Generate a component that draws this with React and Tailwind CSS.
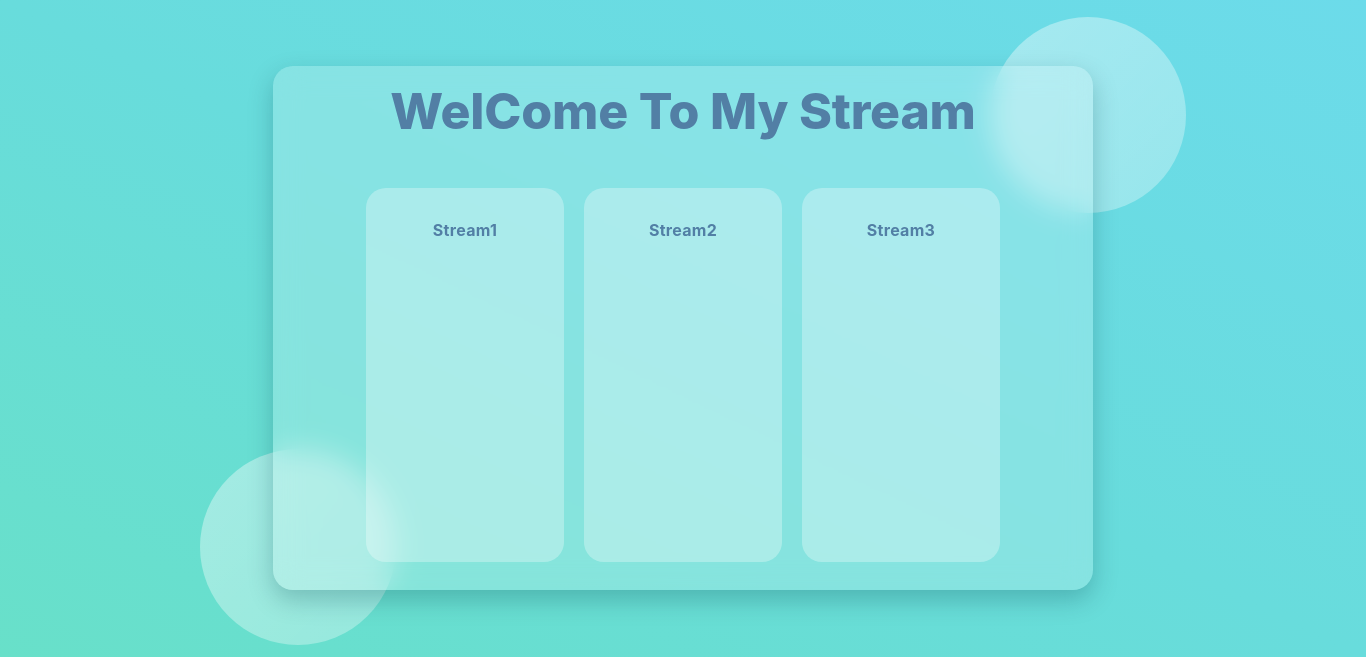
export default function App() {
  const streams = ['Stream1', 'Stream2', 'Stream3'];

  return (
    <div className="relative h-[657px] w-full overflow-hidden bg-linear-to-tr from-[#68e0c9] via-[#68dcdc] to-[#6cdbea] font-['Inter',sans-serif]">
      {/* floating circles behind the glass */}
      <div className="absolute left-[990px] top-[17px] h-[196px] w-[196px] rounded-full bg-linear-to-br from-white/40 to-white/30" />
      <div className="absolute left-[200px] top-[449px] h-[196px] w-[196px] rounded-full bg-linear-to-br from-white/40 to-white/30" />

      <div className="flex h-full items-start justify-center pt-[66px]">
        <div className="relative flex h-[524px] w-[820px] flex-col items-center rounded-[20px] bg-white/20 shadow-[0_10px_25px_rgba(0,60,70,0.25)] backdrop-blur-[14px]">
          <h1 className="mt-[13px] text-[50px] font-extrabold leading-[64px] tracking-[-0.2px] text-[#527fa5]">
            WelCome To My Stream
          </h1>
          <div className="mt-[45px] flex gap-[20px]">
            {streams.map((s) => (
              <div key={s} className="flex h-[374px] w-[198px] flex-col items-center rounded-[20px] bg-white/30">
                <p className="mt-[30px] text-[16px] font-bold tracking-[0.3px] text-[#527fa5]">{s}</p>
              </div>
            ))}
          </div>
        </div>
      </div>
    </div>
  );
}
